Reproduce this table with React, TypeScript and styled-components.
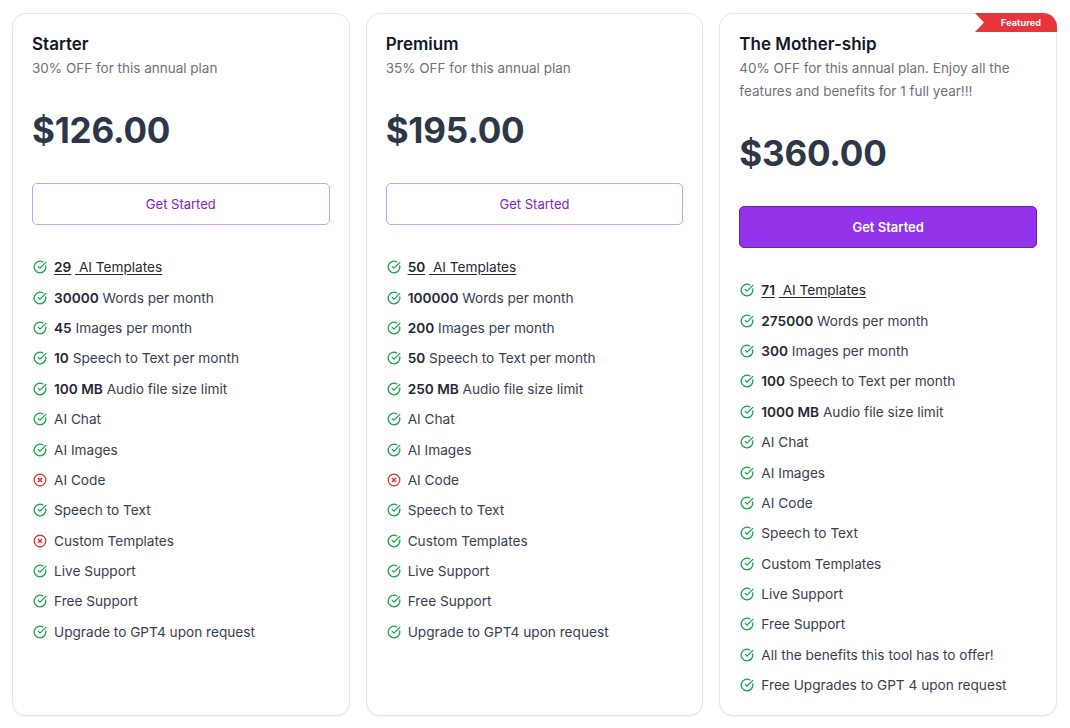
import React from "react";
import styled, { createGlobalStyle, css } from "styled-components";
import { CircleCheckBig, CircleX } from "lucide-react";

const GlobalStyle = createGlobalStyle`
  html, body { margin: 0; padding: 0; background: #ffffff; }
  body { font-family: Inter, "Noto Sans", Arial, sans-serif; -webkit-font-smoothing: antialiased; }
  * { box-sizing: border-box; }
`;

const Grid = styled.div`
  display: grid;
  grid-template-columns: repeat(3, 1fr);
  gap: 16px;
  padding: 13px 13px 12px 12px;
  align-items: stretch;
`;

const Card = styled.div`
  position: relative;
  border: 1px solid #e3e5e9;
  border-radius: 14px;
  background: #fff;
  box-shadow: 0 1px 2px rgba(15, 23, 42, 0.06);
  padding: 18px 19px 15px 19px;
  display: flex;
  flex-direction: column;
`;

const Ribbon = styled.div`
  position: absolute;
  top: -1px;
  right: -1px;
  width: 82px;
  height: 19px;
  background: #e8353b;
  border-top-right-radius: 14px;
  clip-path: polygon(0 0, 100% 0, 100% 100%, 0 100%, 9px 50%);
  color: #fff;
  font-size: 9px;
  font-weight: 700;
  display: flex;
  align-items: center;
  justify-content: center;
  padding-left: 14px;
  padding-right: 4px;
  letter-spacing: 0.1px;
`;

const Title = styled.div`
  font-size: 17px;
  line-height: 24px;
  font-weight: 600;
  color: #111827;
`;

const Subtitle = styled.div`
  margin-top: 1px;
  font-size: 13.5px;
  line-height: 23px;
  color: #6b7280;
`;

const Price = styled.div`
  margin-top: 30px;
  font-size: 35px;
  line-height: 40px;
  font-weight: 700;
  color: #2d3748;
  letter-spacing: -0.2px;
`;

const Button = styled.button<{ $primary?: boolean }>`
  margin-top: 33px;
  height: 42px;
  width: 100%;
  border-radius: 5px;
  font-family: inherit;
  font-size: 13px;
  cursor: pointer;
  ${(p) =>
    p.$primary
      ? css`
          background: #9333ea;
          border: 1px solid #6b21a8;
          color: #ffffff;
          font-weight: 600;
        `
      : css`
          background: #ffffff;
          border: 1px solid #c4a2ee;
          color: #7e22ce;
          font-weight: 400;
        `}
`;

const List = styled.ul`
  list-style: none;
  margin: 27px 0 0 0;
  padding: 0;
  display: flex;
  flex-direction: column;
`;

const Item = styled.li`
  height: 30.4px;
  display: flex;
  align-items: center;
  gap: 7px;
  font-size: 13.65px;
  color: #374151;
  white-space: nowrap;
  padding-left: 1px;
`;

const IconBox = styled.span<{ $ok: boolean }>`
  display: inline-flex;
  width: 14px;
  color: ${(p) => (p.$ok ? "#16a34a" : "#dc2626")};
`;

const Strong = styled.strong`
  font-weight: 600;
  color: #1f2937;
`;

const Link = styled.span`
  text-decoration: underline;
  text-underline-offset: 2px;
  color: #1f2937;
`;

type Feature = { ok: boolean; bold?: string; text: string; link?: boolean };

type Plan = {
  name: string;
  sub: string;
  price: string;
  primary?: boolean;
  featured?: boolean;
  features: Feature[];
};

const plans: Plan[] = [
  {
    name: "Starter",
    sub: "30% OFF for this annual plan",
    price: "$126.00",
    features: [
      { ok: true, bold: "29", text: "AI Templates", link: true },
      { ok: true, bold: "30000", text: "Words per month" },
      { ok: true, bold: "45", text: "Images per month" },
      { ok: true, bold: "10", text: "Speech to Text per month" },
      { ok: true, bold: "100 MB", text: "Audio file size limit" },
      { ok: true, text: "AI Chat" },
      { ok: true, text: "AI Images" },
      { ok: false, text: "AI Code" },
      { ok: true, text: "Speech to Text" },
      { ok: false, text: "Custom Templates" },
      { ok: true, text: "Live Support" },
      { ok: true, text: "Free Support" },
      { ok: true, text: "Upgrade to GPT4 upon request" },
    ],
  },
  {
    name: "Premium",
    sub: "35% OFF for this annual plan",
    price: "$195.00",
    features: [
      { ok: true, bold: "50", text: "AI Templates", link: true },
      { ok: true, bold: "100000", text: "Words per month" },
      { ok: true, bold: "200", text: "Images per month" },
      { ok: true, bold: "50", text: "Speech to Text per month" },
      { ok: true, bold: "250 MB", text: "Audio file size limit" },
      { ok: true, text: "AI Chat" },
      { ok: true, text: "AI Images" },
      { ok: false, text: "AI Code" },
      { ok: true, text: "Speech to Text" },
      { ok: true, text: "Custom Templates" },
      { ok: true, text: "Live Support" },
      { ok: true, text: "Free Support" },
      { ok: true, text: "Upgrade to GPT4 upon request" },
    ],
  },
  {
    name: "The Mother-ship",
    sub: "40% OFF for this annual plan. Enjoy all the features and benefits for 1 full year!!!",
    price: "$360.00",
    primary: true,
    featured: true,
    features: [
      { ok: true, bold: "71", text: "AI Templates", link: true },
      { ok: true, bold: "275000", text: "Words per month" },
      { ok: true, bold: "300", text: "Images per month" },
      { ok: true, bold: "100", text: "Speech to Text per month" },
      { ok: true, bold: "1000 MB", text: "Audio file size limit" },
      { ok: true, text: "AI Chat" },
      { ok: true, text: "AI Images" },
      { ok: true, text: "AI Code" },
      { ok: true, text: "Speech to Text" },
      { ok: true, text: "Custom Templates" },
      { ok: true, text: "Live Support" },
      { ok: true, text: "Free Support" },
      { ok: true, text: "All the benefits this tool has to offer!" },
      { ok: true, text: "Free Upgrades to GPT 4 upon request" },
    ],
  },
];

function FeatureRow({ f }: { f: Feature }) {
  return (
    <Item>
      <IconBox $ok={f.ok}>
        {f.ok ? <CircleCheckBig size={14} strokeWidth={2.2} /> : <CircleX size={14} strokeWidth={2} />}
      </IconBox>
      <span>
        {f.link ? (
          <>
            <Link>
              <Strong>{f.bold}</Strong>
            </Link>{" "}
            <Link>{"\u00a0" + f.text}</Link>
          </>
        ) : (
          <>
            {f.bold && <Strong>{f.bold}</Strong>}
            {f.bold ? " " : ""}
            {f.text}
          </>
        )}
      </span>
    </Item>
  );
}

export default function App() {
  return (
    <>
      <GlobalStyle />
      <Grid>
        {plans.map((p) => (
          <Card key={p.name}>
            {p.featured && <Ribbon>Featured</Ribbon>}
            <Title>{p.name}</Title>
            <Subtitle>{p.sub}</Subtitle>
            <Price>{p.price}</Price>
            <Button $primary={p.primary}>Get Started</Button>
            <List>
              {p.features.map((f, i) => (
                <FeatureRow key={i} f={f} />
              ))}
            </List>
          </Card>
        ))}
      </Grid>
    </>
  );
}
